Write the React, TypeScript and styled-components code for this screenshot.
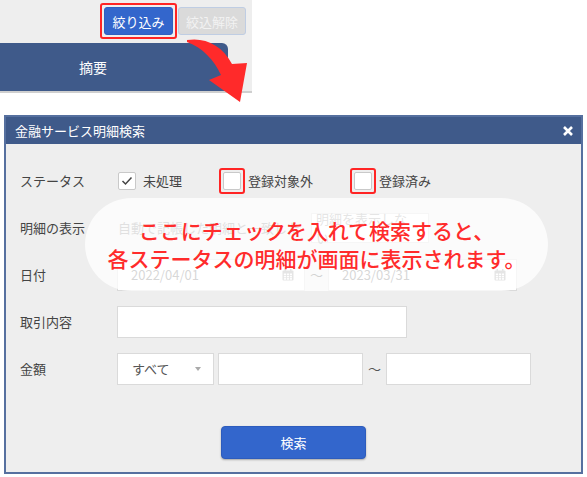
import React from "react";
import styled, { createGlobalStyle } from "styled-components";

const GlobalStyle = createGlobalStyle`
  html, body { margin: 0; padding: 0; background: #ffffff; }
  body { font-family: "Noto Sans CJK JP", "Noto Sans", sans-serif; }
  * { box-sizing: border-box; }
`;

const Page = styled.div`
  position: relative;
  width: 587px;
  height: 477px;
  overflow: hidden;
  background: #ffffff;
`;

/* ---------- top screenshot excerpt ---------- */
const TopArea = styled.div`
  width: 252px;
  height: 93px;
  background: #eeeeee;
  display: flex;
  flex-direction: column;
  border-bottom: 2px solid #cfcfcf;
`;

const Toolbar = styled.div`
  height: 43px;
  display: flex;
  align-items: center;
  padding: 0 0 1px 100px;
  gap: 1px;
`;

const RedFrame = styled.span`
  display: inline-flex;
  border: 2px solid #ff2424;
  border-radius: 3px;
  padding: 2px;
`;

const TopButton = styled.button<{ $disabled?: boolean }>`
  height: 28px;
  width: ${(p) => (p.$disabled ? "68px" : "69px")};
  padding: 0;
  border-radius: 3px;
  font-family: "Noto Sans CJK JP", sans-serif;
  font-size: 13px;
  border: 1px solid ${(p) => (p.$disabled ? "#bfcde3" : "#2f5fc0")};
  background: ${(p) => (p.$disabled ? "#dadada" : "#3366cc")};
  color: ${(p) => (p.$disabled ? "#f2f2f2" : "#ffffff")};
`;

const ColumnHeader = styled.div`
  width: 228px;
  height: 48px;
  background: #3f5a8a;
  border-top-right-radius: 6px;
  display: flex;
  align-items: center;
  padding-left: 79px;
  color: #ffffff;
  font-size: 14px;
`;

const Arrow = styled.svg`
  position: absolute;
  left: 0;
  top: 0;
`;

/* ---------- dialog ---------- */
const Dialog = styled.div`
  position: relative;
  margin: 22px 0 0 4px;
  width: 579px;
  height: 359px;
  border: 2px solid #56709f;
  background: #eeeeee;
  display: flex;
  flex-direction: column;
`;

const DialogHeader = styled.div`
  height: 27px;
  background: #3f5a8a;
  display: flex;
  align-items: center;
  justify-content: space-between;
  padding: 0 8px 0 9px;
  color: #ffffff;
  font-size: 13px;
`;

const CloseIcon = styled.svg`
  display: block;
`;

const Body = styled.div`
  padding-top: 13px;
  display: flex;
  flex-direction: column;
`;

const Row = styled.div`
  height: 47px;
  padding-left: 14px;
  display: grid;
  grid-template-columns: 97px 1fr;
  align-items: center;
`;

const Label = styled.div`
  font-size: 13px;
  color: #444444;
`;

const Controls = styled.div<{ $gap?: number }>`
  display: flex;
  align-items: center;
  gap: ${(p) => p.$gap ?? 0}px;
`;

const Option = styled.label`
  display: inline-flex;
  align-items: center;
  gap: 7px;
  font-size: 13px;
  color: #444444;
`;

const CheckBox = styled.span`
  width: 18px;
  height: 18px;
  border: 1px solid #c9c9c9;
  border-radius: 2px;
  background: #ffffff;
  display: inline-flex;
  align-items: center;
  justify-content: center;
`;

const CheckHighlight = styled.span`
  display: inline-flex;
  margin: -4px;
  padding: 2px;
  border: 2px solid #ff2424;
  border-radius: 3px;
`;

const FadedText = styled.span`
  font-size: 13px;
  color: #888888;
  white-space: nowrap;
`;

const Field = styled.div<{ $w: number }>`
  width: ${(p) => p.$w}px;
  height: 32px;
  background: #ffffff;
  border: 1px solid #dadada;
  display: flex;
  align-items: center;
  justify-content: space-between;
  padding: 0 10px 0 13px;
  font-size: 13px;
  color: #666666;
`;

const SelectField = styled(Field)`
  padding: 0 12px 0 14px;
  color: #555555;
  margin-right: 4px;
`;

const Caret = styled.span`
  width: 0;
  height: 0;
  border-left: 3.5px solid transparent;
  border-right: 3.5px solid transparent;
  border-top: 4px solid #aaaaaa;
`;

const Tilde = styled.span`
  width: 23px;
  text-align: center;
  font-size: 13px;
  color: #555555;
`;

const Footer = styled.div`
  display: flex;
  justify-content: center;
  padding-top: 34px;
`;

const SearchButton = styled.button`
  width: 145px;
  height: 33px;
  border: 1px solid #2d5cbd;
  border-radius: 4px;
  background: #3366cc;
  color: #ffffff;
  font-family: "Noto Sans CJK JP", sans-serif;
  font-size: 13px;
  box-shadow: 0 1px 2px rgba(0, 0, 0, 0.3);
`;

const Bubble = styled.div`
  position: absolute;
  left: 79px;
  top: 81px;
  width: 463px;
  height: 93px;
  border-radius: 47px;
  background: rgba(255, 255, 255, 0.74);
  padding-top: 18px;
  text-align: center;
  color: #ff2b2b;
  font-size: 21px;
  line-height: 28px;
  font-weight: 500;
  white-space: nowrap;
`;

const Calendar = () => (
  <svg width="12" height="12" viewBox="0 0 12 12">
    <rect x="0.5" y="1.5" width="11" height="10" rx="1" fill="#9a9a9a" />
    <rect x="2.5" y="0" width="1.5" height="3" fill="#9a9a9a" />
    <rect x="8" y="0" width="1.5" height="3" fill="#9a9a9a" />
    {[0, 1, 2].map((r) =>
      [0, 1, 2].map((c) => (
        <rect key={`${r}-${c}`} x={1.8 + c * 3} y={4.5 + r * 2.3} width="2.2" height="1.6" fill="#ffffff" />
      ))
    )}
  </svg>
);

const Check = () => (
  <svg width="12" height="10" viewBox="0 0 12 10">
    <path d="M1.5 5 L4.5 8 L10.5 1.5" fill="none" stroke="#444" strokeWidth="1.5" />
  </svg>
);

export default function App() {
  return (
    <Page>
      <GlobalStyle />
      <TopArea>
        <Toolbar>
          <RedFrame>
            <TopButton>絞り込み</TopButton>
          </RedFrame>
          <TopButton $disabled>絞込解除</TopButton>
        </Toolbar>
        <ColumnHeader>摘要</ColumnHeader>
      </TopArea>

      <Dialog>
        <DialogHeader>
          <span>金融サービス明細検索</span>
          <CloseIcon width="10" height="10" viewBox="0 0 10 10">
            <path d="M1 1 L9 9 M9 1 L1 9" stroke="#ffffff" strokeWidth="2.6" />
          </CloseIcon>
        </DialogHeader>
        <Body>
          <Row>
            <Label>ステータス</Label>
            <Controls $gap={41} style={{ paddingLeft: 1 }}>
              <Option>
                <CheckBox>
                  <Check />
                </CheckBox>
                未処理
              </Option>
              <Option>
                <CheckHighlight>
                  <CheckBox />
                </CheckHighlight>
                登録対象外
              </Option>
              <Option>
                <CheckHighlight>
                  <CheckBox />
                </CheckHighlight>
                登録済み
              </Option>
            </Controls>
          </Row>
          <Row>
            <Label>明細の表示</Label>
            <Controls>
              <FadedText style={{ paddingLeft: 1, width: 194 }}>自動で記帳した明細と一致した</FadedText>
              <Field $w={118} style={{ height: 30, paddingLeft: 4, color: "#999" }}>
                明細を表示しない
              </Field>
            </Controls>
          </Row>
          <Row>
            <Label>日付</Label>
            <Controls>
              <Field $w={188}>
                2022/04/01
                <Calendar />
              </Field>
              <Tilde>～</Tilde>
              <Field $w={189}>
                2023/03/31
                <Calendar />
              </Field>
            </Controls>
          </Row>
          <Row>
            <Label>取引内容</Label>
            <Controls>
              <Field $w={290} />
            </Controls>
          </Row>
          <Row>
            <Label>金額</Label>
            <Controls>
              <SelectField $w={97}>
                すべて
                <Caret />
              </SelectField>
              <Field $w={145} />
              <Tilde>～</Tilde>
              <Field $w={145} />
            </Controls>
          </Row>
          <Footer>
            <SearchButton>検索</SearchButton>
          </Footer>
        </Body>
        <Bubble>
          ここにチェックを入れて検索すると、
          <br />
          各ステータスの明細が画面に表示されます。
        </Bubble>
      </Dialog>

      <Arrow width="260" height="110" viewBox="0 0 260 110">
        <path
          d="M187 40 C205 37 222 45 232 64 L247 63 L240 102 L209 80 L221 75 C214 60 203 48 187 42 Z"
          fill="#ff2a2a"
        />
      </Arrow>
    </Page>
  );
}
